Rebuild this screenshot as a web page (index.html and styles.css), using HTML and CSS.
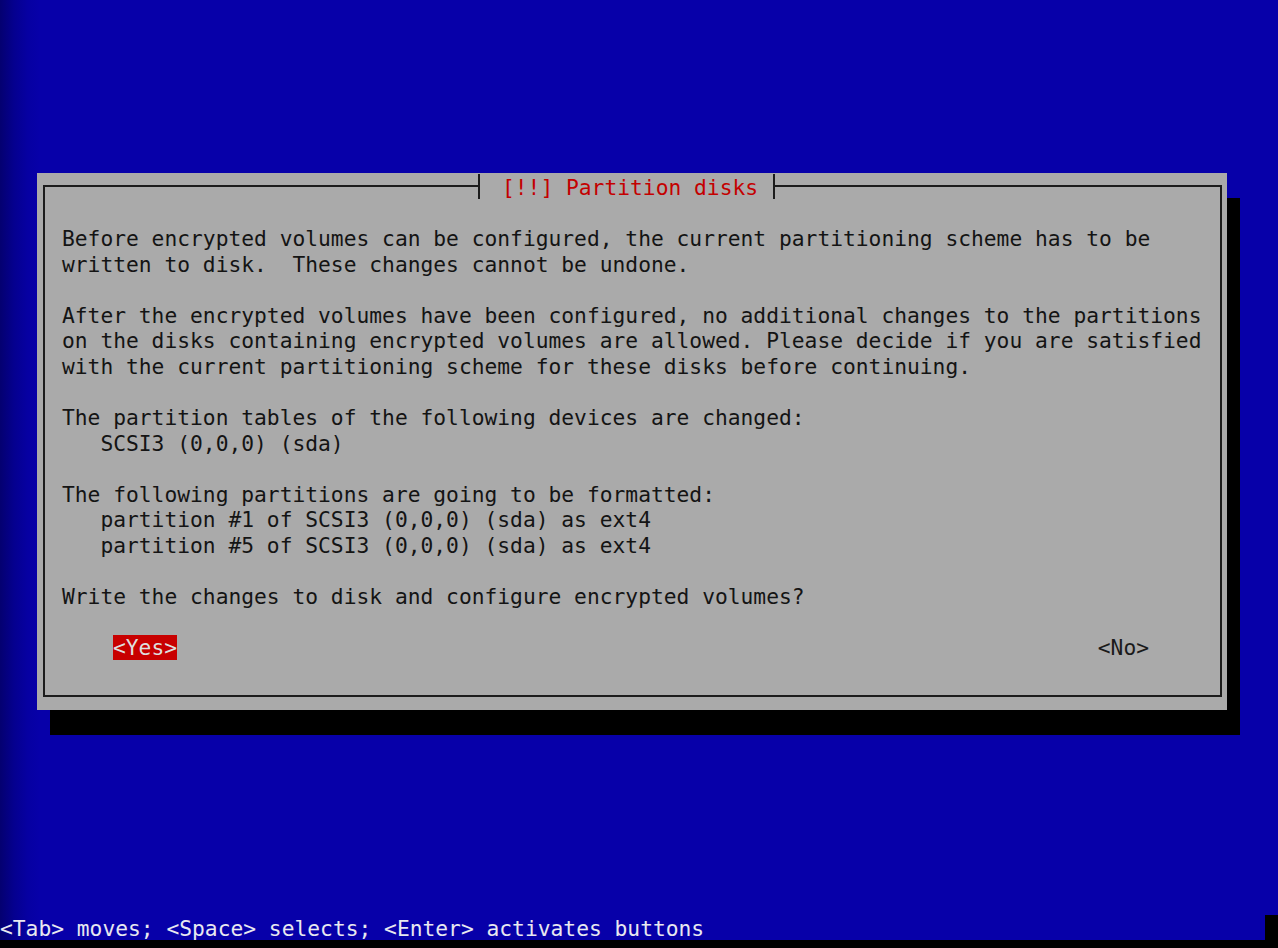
FILE: index.html
```html
<!DOCTYPE html>
<html>
<head>
<meta charset="utf-8">
<link rel="stylesheet" href="styles.css">
<title>Partition disks</title>
</head>
<body>
<div class="screen">
  <div class="stage">
    <div class="dialog">
      <div class="frame">
        <div class="title"><span class="title-text">[!!] Partition disks</span></div>
<pre class="body-text">Before encrypted volumes can be configured, the current partitioning scheme has to be
written to disk.  These changes cannot be undone.

After the encrypted volumes have been configured, no additional changes to the partitions
on the disks containing encrypted volumes are allowed. Please decide if you are satisfied
with the current partitioning scheme for these disks before continuing.

The partition tables of the following devices are changed:
   SCSI3 (0,0,0) (sda)

The following partitions are going to be formatted:
   partition #1 of SCSI3 (0,0,0) (sda) as ext4
   partition #5 of SCSI3 (0,0,0) (sda) as ext4

Write the changes to disk and configure encrypted volumes?
</pre>
        <div class="buttons">
          <span class="btn btn-active">&lt;Yes&gt;</span>
          <span class="btn">&lt;No&gt;</span>
        </div>
      </div>
    </div>
  </div>
  <div class="footer">
    <div class="status">
      <span class="status-text">&lt;Tab&gt; moves; &lt;Space&gt; selects; &lt;Enter&gt; activates buttons</span>
      <span class="status-end"></span>
    </div>
    <div class="bottom-strip"></div>
  </div>
</div>
</body>
</html>
```
FILE: styles.css
```css
html, body {
  margin: 0;
  padding: 0;
}
body {
  width: 1278px;
  height: 948px;
  overflow: hidden;
  background: #0700a9;
  font-family: "DejaVu Sans Mono", "Liberation Mono", monospace;
  font-size: 21.28px;
}
.screen {
  width: 1278px;
  height: 948px;
  display: flex;
  flex-direction: column;
  background: linear-gradient(to right, #040070 0px, #05008f 14px, #0600a2 28px, #0700a9 40px, #0700a9 100%);
}
.stage {
  flex: 1;
  padding-top: 173px;
  padding-left: 37px;
}
.dialog {
  width: 1190px;
  height: 537px;
  box-sizing: border-box;
  background: #aaaaaa;
  box-shadow: 13px 25px 0 0 #000;
  padding: 12px 5px 13px 6px;
}
.frame {
  position: relative;
  height: 100%;
  box-sizing: border-box;
  border: 2px solid #1c1c1c;
  padding: 39px 17px 0 17px;
}
.title {
  position: absolute;
  top: -13px;
  left: 433px;
  height: 25px;
  width: 297px;
  box-sizing: border-box;
  background: #aaaaaa;
  border-left: 2px solid #1c1c1c;
  border-right: 2px solid #1c1c1c;
  display: flex;
  align-items: center;
  padding-left: 22px;
  padding-top: 2px;
}
.title-text {
  color: #c40000;
  white-space: pre;
  line-height: 25px;
}
.body-text {
  margin: 0;
  font: inherit;
  color: #141414;
  line-height: 25.56px;
  white-space: pre;
}
.buttons {
  display: flex;
  justify-content: space-between;
  padding: 0 54px 0 51px;
  margin-top: 25.56px;
  line-height: 25px;
}
.btn {
  color: #1a1a1a;
  white-space: pre;
  height: 25px;
}
.btn-active {
  background: #c80000;
  color: #dedede;
}
.footer {
  display: flex;
  flex-direction: column;
}
.status {
  display: flex;
  height: 25px;
}
.status-text {
  flex: 1;
  color: #e8e8f0;
  white-space: pre;
  line-height: 23px;
  padding-top: 2px;
}
.status-end {
  width: 13px;
  background: #000;
}
.bottom-strip {
  height: 8px;
  background: #000;
}
```
